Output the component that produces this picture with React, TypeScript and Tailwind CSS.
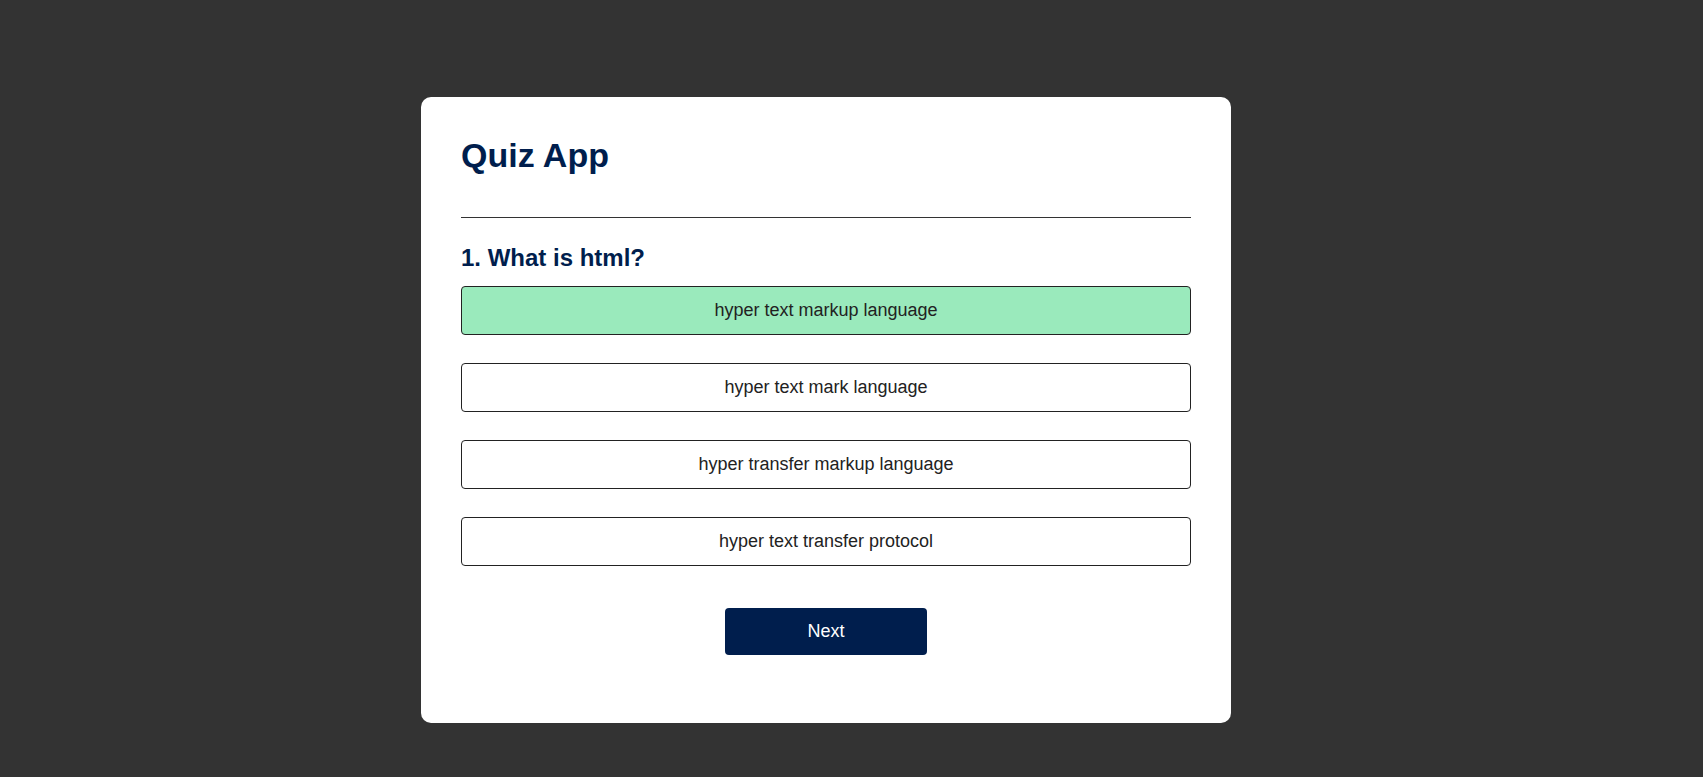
const answers = [
  { text: "hyper text markup language", correct: true },
  { text: "hyper text mark language", correct: false },
  { text: "hyper transfer markup language", correct: false },
  { text: "hyper text transfer protocol", correct: false },
];

export default function App() {
  return (
    <div className="min-h-screen bg-[#333333] pt-[97px] pl-[421px] font-['Liberation_Sans',Arial,sans-serif]">
      <div className="w-[810px] rounded-[10px] bg-white px-10 pt-10 pb-[68px]">
        <h1 className="text-[34px] font-bold leading-[37px] text-[#001e4d]">Quiz App</h1>
        <div className="mt-[43px] h-px bg-[#333333]" />

        <div className="pt-[26px]">
          <h2 className="text-[24px] font-bold leading-[28px] text-[#001e4d]">1. What is html?</h2>
          <div className="mt-[14px] flex flex-col gap-[28px]">
            {answers.map((a) => (
              <button
                key={a.text}
                className={`h-[49px] w-full rounded-[4px] border border-[#222222] text-[18px] text-[#222222] ${
                  a.correct ? "bg-[#9aeabc]" : "bg-white"
                }`}
              >
                {a.text}
              </button>
            ))}
          </div>
        </div>

        <button className="mx-auto mt-[42px] block h-[47px] w-[202px] rounded-[4px] bg-[#001e4d] text-[18px] font-medium text-white">
          Next
        </button>
      </div>
    </div>
  );
}
